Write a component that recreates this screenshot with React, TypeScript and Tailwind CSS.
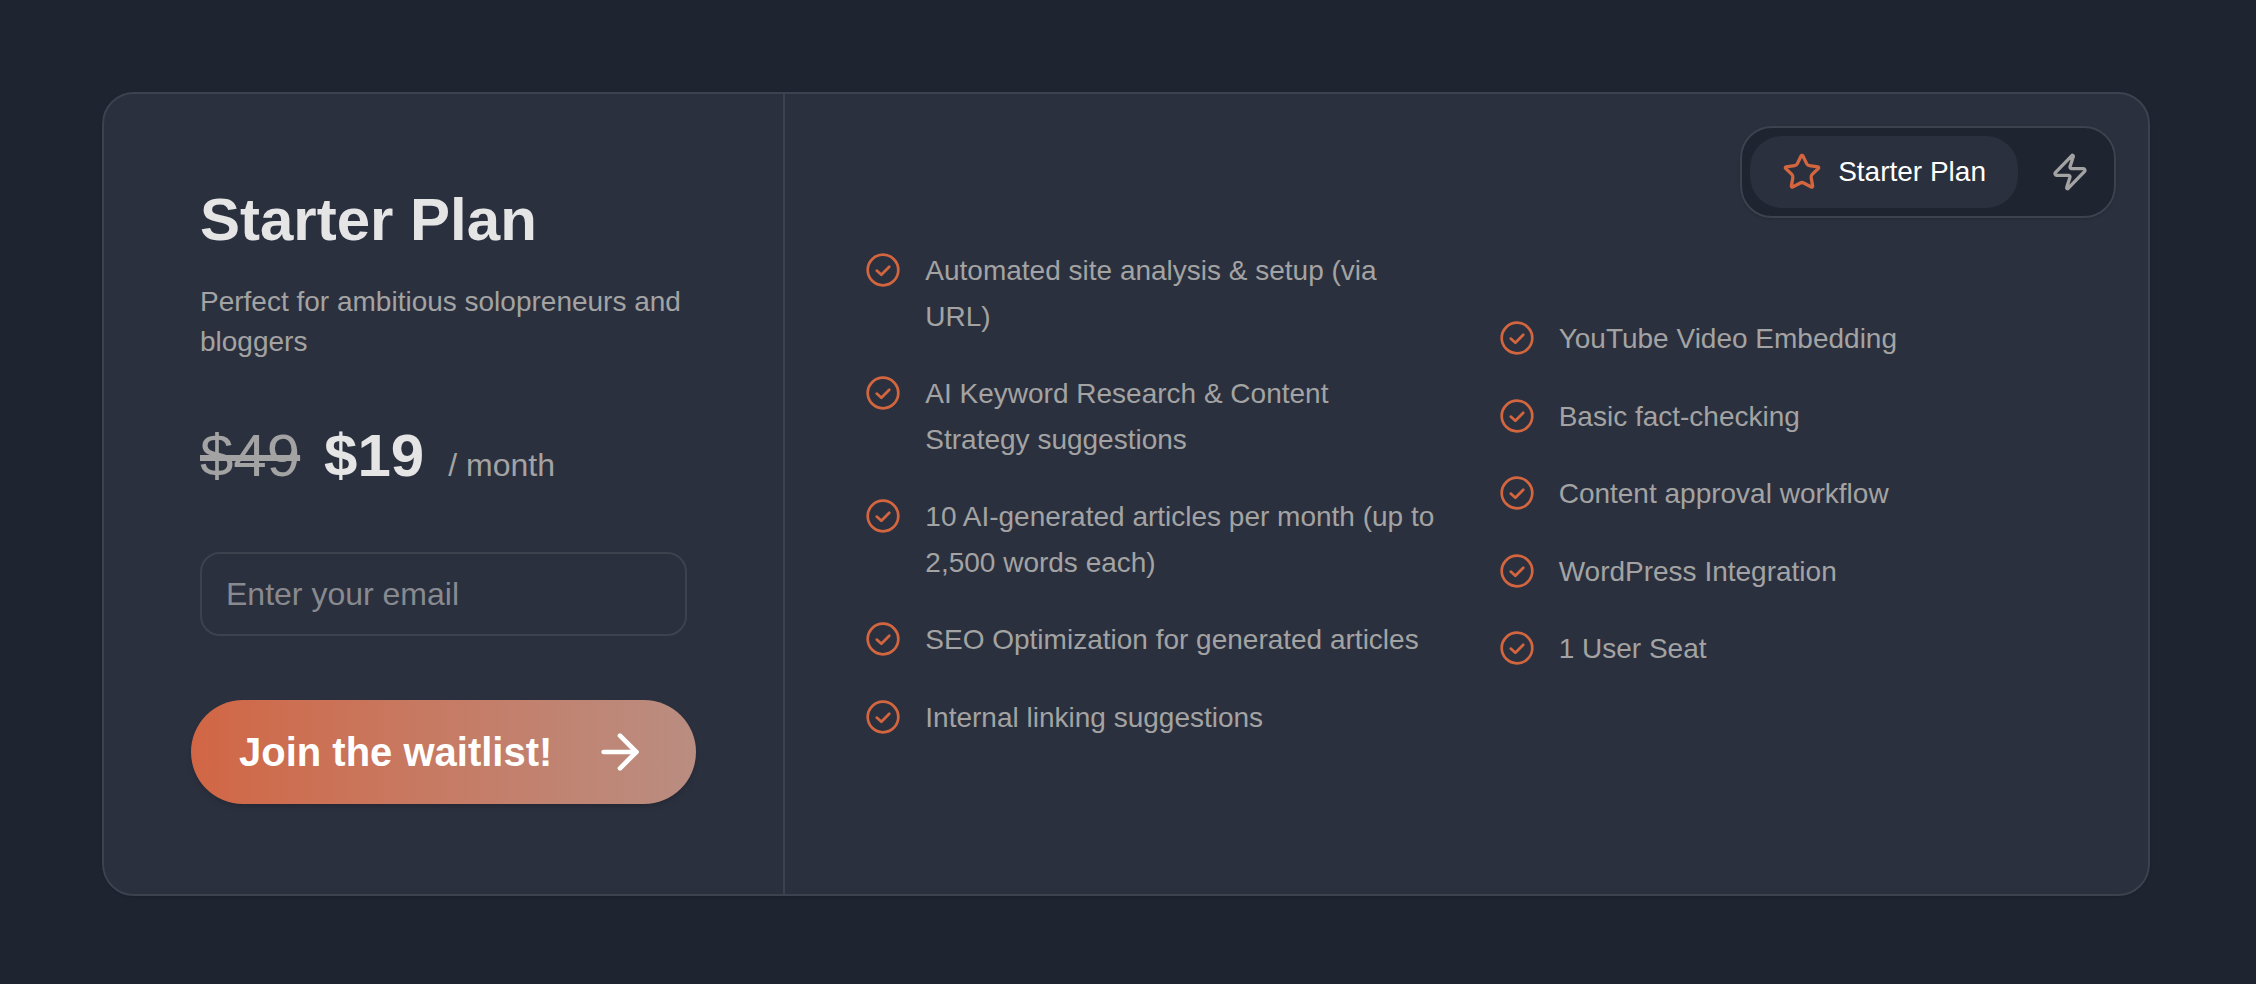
import { useState } from "react";
import { ArrowRight, Star, Zap } from "lucide-react";

const mainFeatures = [
  "Automated site analysis & setup (via URL)",
  "AI Keyword Research & Content Strategy suggestions",
  "10 AI-generated articles per month (up to 2,500 words each)",
  "SEO Optimization for generated articles",
  "Internal linking suggestions",
];

const extraFeatures = [
  "YouTube Video Embedding",
  "Basic fact-checking",
  "Content approval workflow",
  "WordPress Integration",
  "1 User Seat",
];

const CheckIcon = () => (
  <svg
    viewBox="0 0 24 24"
    fill="none"
    stroke="currentColor"
    strokeWidth="1.8"
    strokeLinecap="round"
    strokeLinejoin="round"
    aria-hidden="true"
    className="mt-1 size-9 shrink-0 text-[#d4663f]"
  >
    <circle cx="12" cy="12" r="10.2" />
    <path d="M7.8 12.4L10.9 15.2L16.2 9.8" />
  </svg>
);

const FeatureList = ({ features }: { features: string[] }) => {
  return (
    <ul className="flex flex-col gap-8">
      {features.map((feature) => (
        <li key={feature} className="flex items-start gap-6">
          <CheckIcon />
          <span className="text-[28px] leading-relaxed text-[#a3a3a3]">
            {feature}
          </span>
        </li>
      ))}
    </ul>
  );
};

export default function App() {
  const [email, setEmail] = useState("");

  const onSubmit = (event: React.FormEvent) => {
    event.preventDefault();
    setEmail("");
  };

  return (
    <main className="min-h-screen bg-[#1f2431] pt-[92px] pr-[106px] pb-[88px] pl-[102px] font-['Liberation_Sans',Arial,sans-serif]">
      <section className="grid grid-cols-3 rounded-[32px] border-2 border-[#3d424f] bg-[#2b303e] shadow-sm">
        <div className="flex flex-col justify-center border-r-2 border-[#3d424f] px-24 py-[90px]">
          <h1 className="text-[60px] leading-[72px] font-bold text-[#e5e5e5]">
            Starter Plan
          </h1>
          <p className="mt-[26px] text-[28px] leading-10 text-[#a3a3a3]">
            Perfect for ambitious solopreneurs and bloggers
          </p>
          <div className="mt-[58px] flex items-baseline gap-6 text-[#a3a3a3]">
            <span className="text-[60px] leading-[72px] line-through">$49</span>
            <span className="text-[60px] leading-[72px] font-bold text-[#e5e5e5]">
              $19
            </span>
            <span className="text-[32px] leading-10">/ month</span>
          </div>
          <form onSubmit={onSubmit} className="mt-15 flex flex-col gap-16">
            <input
              type="email"
              aria-label="Email"
              placeholder="Enter your email"
              className="h-[84px] w-full rounded-[20px] border-2 border-[#3d424f] bg-transparent px-6 text-[32px] text-[#e5e5e5] outline-none placeholder:text-[#888a90]"
              value={email}
              onChange={(e) => setEmail(e.target.value)}
            />
            <button
              type="submit"
              className="-mx-[9px] flex items-center justify-between rounded-full bg-linear-to-r from-[#d16644] to-[#b98d81] px-12 py-6 text-[40px] leading-14 font-bold text-white shadow-md"
            >
              Join the waitlist!
              <ArrowRight size={56} />
            </button>
          </form>
        </div>

        <div className="col-span-2 grid">
          <div className="col-start-1 row-start-1 m-8 flex gap-4 self-start justify-self-end rounded-[32px] border-2 border-[#3d424f] bg-[#1f2431] p-2 shadow-sm">
            <button
              type="button"
              className="flex items-center gap-4 rounded-[32px] bg-[#2b303e] px-8 py-4 text-[28px] leading-10 font-medium text-white"
            >
              <Star size={40} className="text-[#d4663f]" />
              Starter Plan
            </button>
            <button
              type="button"
              aria-label="Pro Plan"
              className="rounded-[32px] p-4 text-[#a3a3a3]"
            >
              <Zap size={40} />
            </button>
          </div>
          <div className="col-start-1 row-start-1 grid grid-cols-2 items-center gap-16 self-center px-20">
            <FeatureList features={mainFeatures} />
            <FeatureList features={extraFeatures} />
          </div>
        </div>
      </section>
    </main>
  );
}
